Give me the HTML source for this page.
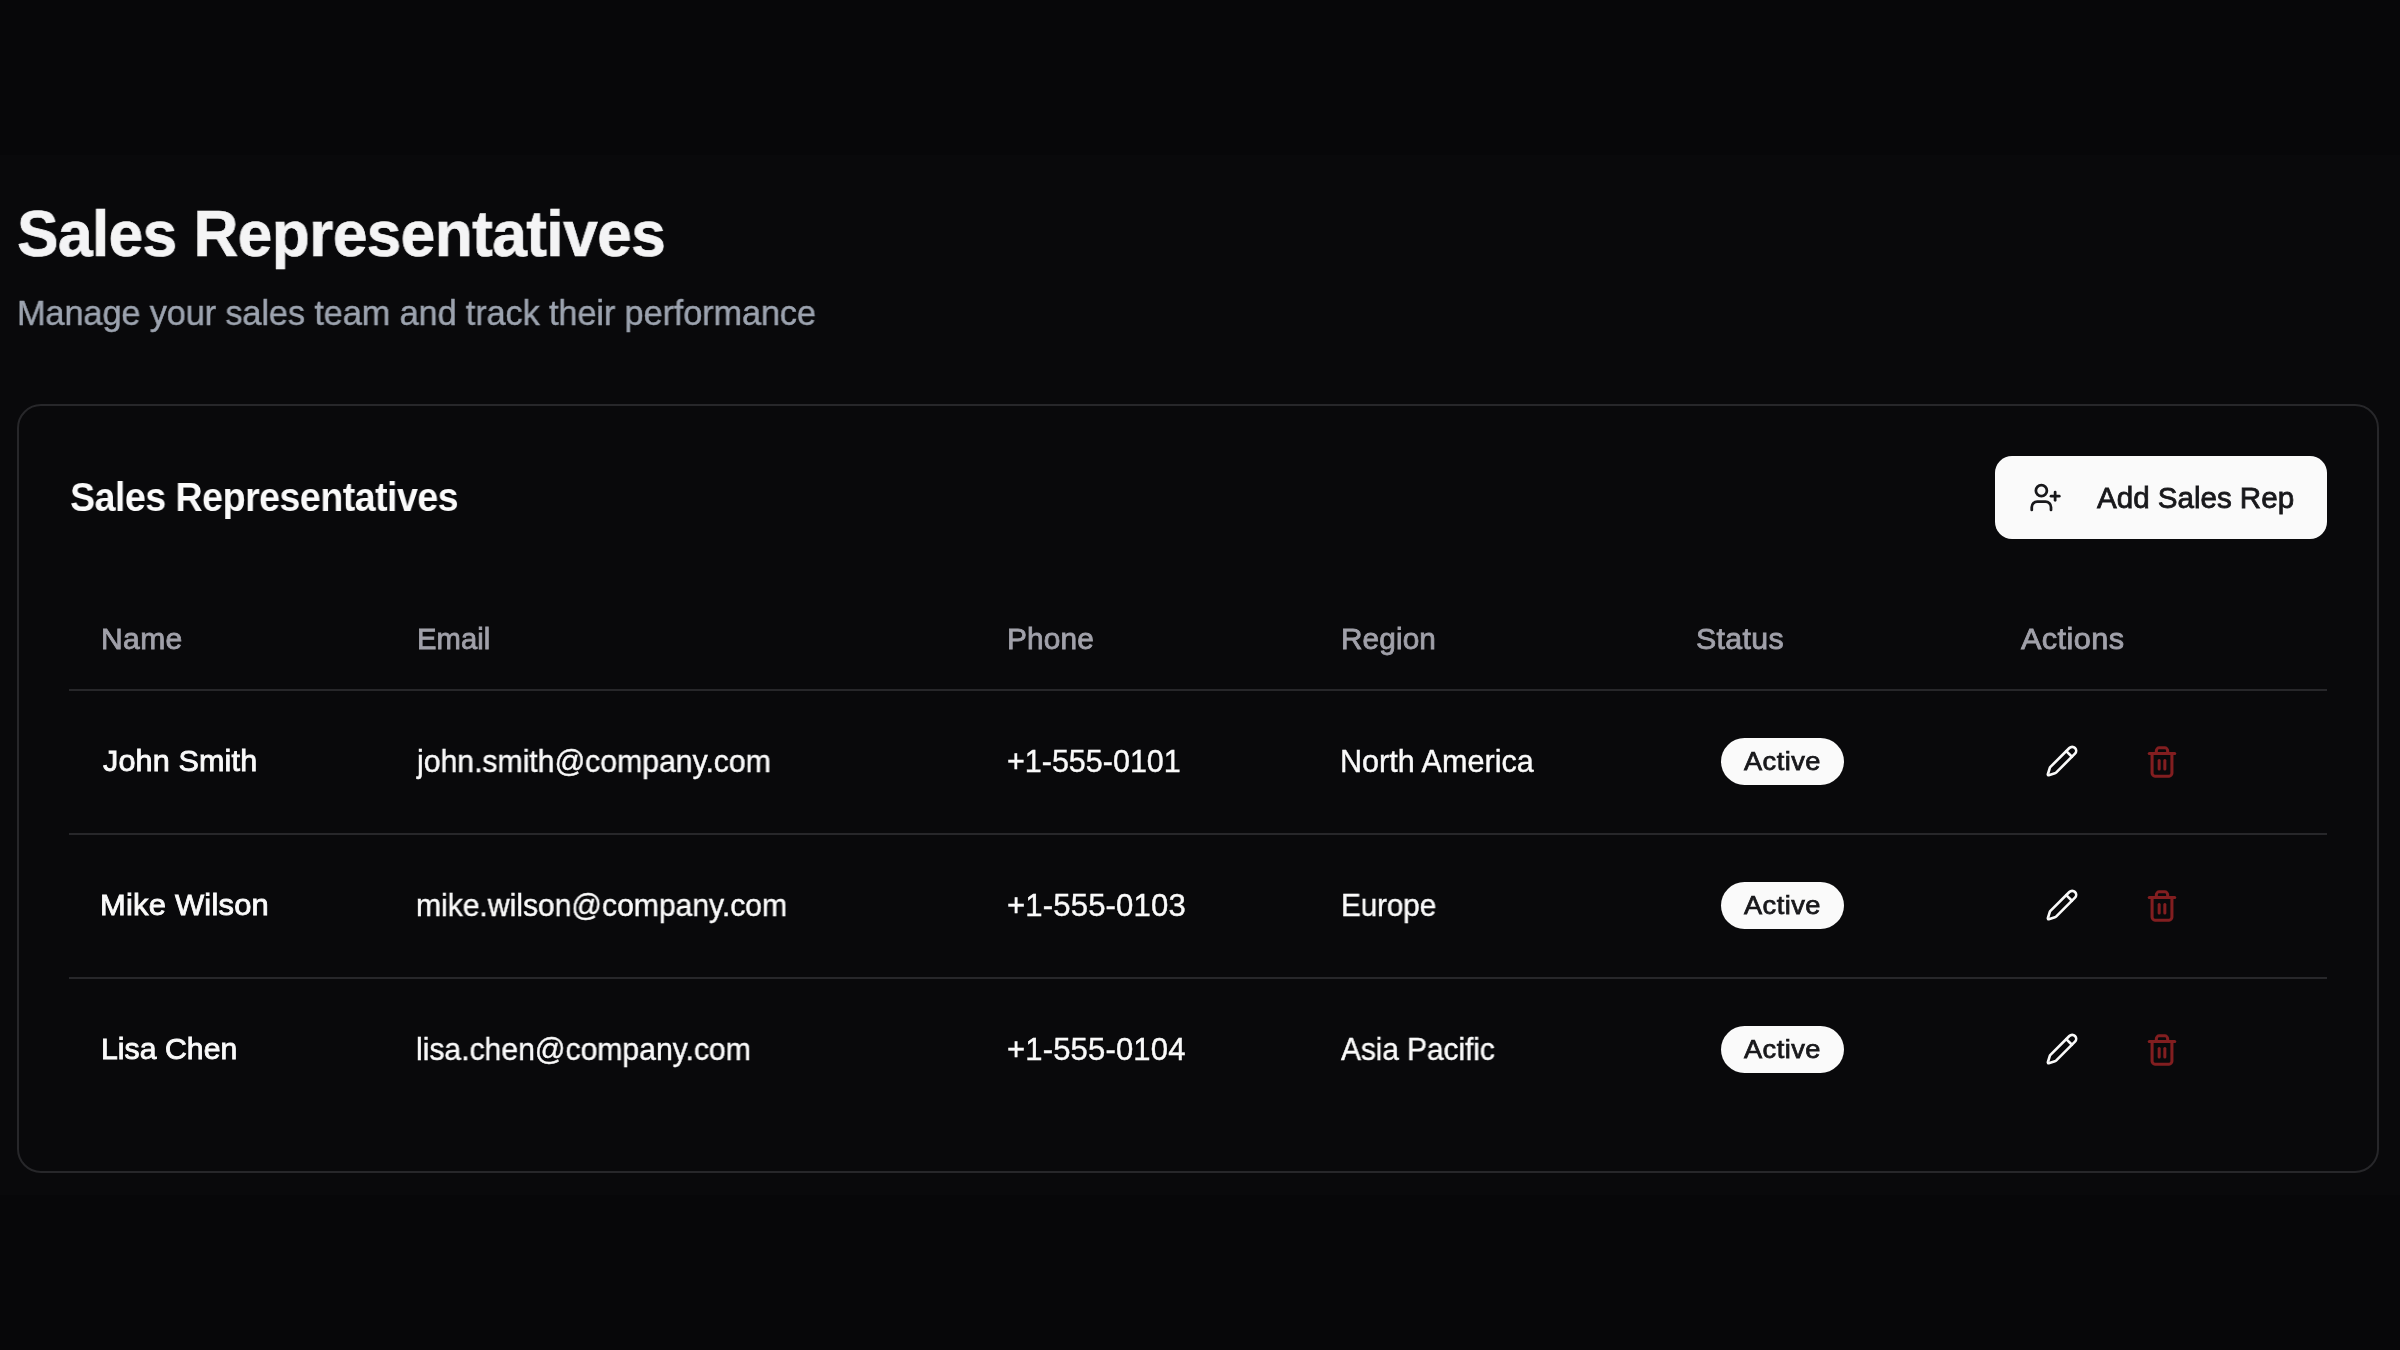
<!DOCTYPE html>
<html><head><meta charset="utf-8"><title>Sales Representatives</title>
<style>
html,body{margin:0;padding:0;}
body{width:2400px;height:1350px;position:relative;overflow:hidden;background:#09090b;font-family:"Liberation Sans",sans-serif;}
.bar{position:absolute;left:0;width:2400px;background:#070709;}
.t{position:absolute;white-space:nowrap;transform-origin:0 0;will-change:transform;}
.ic{position:absolute;display:block;overflow:visible;}
.card{position:absolute;left:17px;top:404px;width:2358px;height:765px;border:2px solid #27272a;border-radius:24px;background:#09090b;box-sizing:content-box;}
.btn{position:absolute;left:1995px;top:456px;width:332px;height:83px;border-radius:17px;background:#fafafa;}
.line{position:absolute;left:69px;width:2258px;height:2px;background:#27272a;}
.badge{position:absolute;left:1721px;width:123px;height:47px;border-radius:24px;background:#fafafa;}
</style></head><body>
<div class="bar" style="top:0;height:155px"></div>
<div class="bar" style="top:1195px;height:155px"></div>
<div class="card"></div>
<div class="btn"></div>
<svg class="ic" style="left:2028.60px;top:480.60px;width:33px;height:33px" viewBox="0 0 24 24" fill="none" stroke="#18181b" stroke-width="2" stroke-linecap="round" stroke-linejoin="round"><path d="M16 21v-2a4 4 0 0 0-4-4H6a4 4 0 0 0-4 4v2"/><circle cx="9" cy="7" r="4"/><line x1="19" x2="19" y1="8" y2="14"/><line x1="22" x2="16" y1="11" y2="11"/></svg>
<div class="line" style="top:688.6px"></div>
<div class="line" style="top:832.6px"></div>
<div class="line" style="top:976.6px"></div>
<div class="badge" style="top:738px"></div>
<svg class="ic" style="left:2044.50px;top:744.00px;width:34px;height:34px" viewBox="0 0 24 24" fill="none" stroke="#fafafa" stroke-width="1.85" stroke-linecap="round" stroke-linejoin="round"><path d="M21.174 6.812a1 1 0 0 0-3.986-3.987L3.842 16.174a2 2 0 0 0-.5.83l-1.321 4.352a.5.5 0 0 0 .623.622l4.353-1.32a2 2 0 0 0 .83-.497z"/><path d="m15 5 4 4"/></svg>
<svg class="ic" style="left:2144.85px;top:744.60px;width:34px;height:34px" viewBox="0 0 24 24" fill="none" stroke="#821e20" stroke-width="2.15" stroke-linecap="round" stroke-linejoin="round"><path d="M3 6h18"/><path d="M19 6v14c0 1-1 2-2 2H7c-1 0-2-1-2-2V6"/><path d="M8 6V4c0-1 1-2 2-2h4c1 0 2 1 2 2v2"/><line x1="10" x2="10" y1="11" y2="17"/><line x1="14" x2="14" y1="11" y2="17"/></svg>
<div class="badge" style="top:882px"></div>
<svg class="ic" style="left:2044.50px;top:888.00px;width:34px;height:34px" viewBox="0 0 24 24" fill="none" stroke="#fafafa" stroke-width="1.85" stroke-linecap="round" stroke-linejoin="round"><path d="M21.174 6.812a1 1 0 0 0-3.986-3.987L3.842 16.174a2 2 0 0 0-.5.83l-1.321 4.352a.5.5 0 0 0 .623.622l4.353-1.32a2 2 0 0 0 .83-.497z"/><path d="m15 5 4 4"/></svg>
<svg class="ic" style="left:2144.85px;top:888.60px;width:34px;height:34px" viewBox="0 0 24 24" fill="none" stroke="#821e20" stroke-width="2.15" stroke-linecap="round" stroke-linejoin="round"><path d="M3 6h18"/><path d="M19 6v14c0 1-1 2-2 2H7c-1 0-2-1-2-2V6"/><path d="M8 6V4c0-1 1-2 2-2h4c1 0 2 1 2 2v2"/><line x1="10" x2="10" y1="11" y2="17"/><line x1="14" x2="14" y1="11" y2="17"/></svg>
<div class="badge" style="top:1026px"></div>
<svg class="ic" style="left:2044.50px;top:1032.00px;width:34px;height:34px" viewBox="0 0 24 24" fill="none" stroke="#fafafa" stroke-width="1.85" stroke-linecap="round" stroke-linejoin="round"><path d="M21.174 6.812a1 1 0 0 0-3.986-3.987L3.842 16.174a2 2 0 0 0-.5.83l-1.321 4.352a.5.5 0 0 0 .623.622l4.353-1.32a2 2 0 0 0 .83-.497z"/><path d="m15 5 4 4"/></svg>
<svg class="ic" style="left:2144.85px;top:1032.60px;width:34px;height:34px" viewBox="0 0 24 24" fill="none" stroke="#821e20" stroke-width="2.15" stroke-linecap="round" stroke-linejoin="round"><path d="M3 6h18"/><path d="M19 6v14c0 1-1 2-2 2H7c-1 0-2-1-2-2V6"/><path d="M8 6V4c0-1 1-2 2-2h4c1 0 2 1 2 2v2"/><line x1="10" x2="10" y1="11" y2="17"/><line x1="14" x2="14" y1="11" y2="17"/></svg>
<div class="t" style="left:17.34px;top:202.28px;font-size:64.884px;line-height:64.884px;font-weight:700;color:#f4f4f5;-webkit-text-stroke:0.7px #f4f4f5;letter-spacing:-0.598px;transform:scaleX(0.9586)">Sales Representatives</div>
<div class="t" style="left:17.44px;top:294.68px;font-size:35.087px;line-height:35.087px;font-weight:400;color:#9ca3af;-webkit-text-stroke:0.45px #9ca3af;letter-spacing:-0.149px;transform:scaleX(0.9798)">Manage your sales team and track their performance</div>
<div class="t" style="left:69.67px;top:478.20px;font-size:40.262px;line-height:40.262px;font-weight:700;color:#fafafa;letter-spacing:-0.583px;transform:scaleX(0.9349)">Sales Representatives</div>
<div class="t" style="left:2096.70px;top:482.57px;font-size:29.593px;line-height:29.593px;font-weight:400;color:#18181b;-webkit-text-stroke:0.8px #18181b;letter-spacing:-0.024px;transform:scaleX(1.0003)">Add Sales Rep</div>
<div class="t" style="left:101.23px;top:625.07px;font-size:29.084px;line-height:29.084px;font-weight:400;color:#a1a1aa;-webkit-text-stroke:0.8px #a1a1aa;letter-spacing:0.360px;transform:scaleX(1.0342)">Name</div>
<div class="t" style="left:417.24px;top:625.07px;font-size:29.084px;line-height:29.084px;font-weight:400;color:#a1a1aa;-webkit-text-stroke:0.8px #a1a1aa;letter-spacing:0.094px;transform:scaleX(1.0036)">Email</div>
<div class="t" style="left:1006.85px;top:625.07px;font-size:29.084px;line-height:29.084px;font-weight:400;color:#a1a1aa;-webkit-text-stroke:0.8px #a1a1aa;letter-spacing:0.150px;transform:scaleX(1.0244)">Phone</div>
<div class="t" style="left:1340.71px;top:625.07px;font-size:29.084px;line-height:29.084px;font-weight:400;color:#a1a1aa;-webkit-text-stroke:0.8px #a1a1aa;letter-spacing:0.120px;transform:scaleX(1.0225)">Region</div>
<div class="t" style="left:1695.71px;top:625.07px;font-size:29.084px;line-height:29.084px;font-weight:400;color:#a1a1aa;-webkit-text-stroke:0.8px #a1a1aa;letter-spacing:0.330px;transform:scaleX(1.0422)">Status</div>
<div class="t" style="left:2021.10px;top:625.07px;font-size:29.084px;line-height:29.084px;font-weight:400;color:#a1a1aa;-webkit-text-stroke:0.8px #a1a1aa;letter-spacing:0.370px;transform:scaleX(1.0557)">Actions</div>
<div class="t" style="left:102.90px;top:746.24px;font-size:29.971px;line-height:29.971px;font-weight:400;color:#fafafa;-webkit-text-stroke:0.85px #fafafa;letter-spacing:0.133px;transform:scaleX(1.0200)">John Smith</div>
<div class="t" style="left:417.19px;top:746.06px;font-size:30.494px;line-height:30.494px;font-weight:400;color:#fafafa;-webkit-text-stroke:0.4px #fafafa;letter-spacing:-0.050px;transform:scaleX(0.9930)">john.smith@company.com</div>
<div class="t" style="left:1007.00px;top:746.06px;font-size:30.494px;line-height:30.494px;font-weight:400;color:#fafafa;-webkit-text-stroke:0.4px #fafafa;transform:scaleX(1.0000)">+1-555-0101</div>
<div class="t" style="left:1339.99px;top:746.06px;font-size:30.494px;line-height:30.494px;font-weight:400;color:#fafafa;-webkit-text-stroke:0.4px #fafafa;letter-spacing:0.012px;transform:scaleX(1.0026)">North America</div>
<div class="t" style="left:1744.00px;top:749.20px;font-size:25.436px;line-height:25.436px;font-weight:400;color:#18181b;-webkit-text-stroke:0.75px #18181b;letter-spacing:0.420px;transform:scaleX(1.0704)">Active</div>
<div class="t" style="left:100.44px;top:890.24px;font-size:29.971px;line-height:29.971px;font-weight:400;color:#fafafa;-webkit-text-stroke:0.85px #fafafa;letter-spacing:0.210px;transform:scaleX(1.0312)">Mike Wilson</div>
<div class="t" style="left:415.52px;top:890.06px;font-size:30.494px;line-height:30.494px;font-weight:400;color:#fafafa;-webkit-text-stroke:0.4px #fafafa;letter-spacing:-0.061px;transform:scaleX(0.9906)">mike.wilson@company.com</div>
<div class="t" style="left:1006.88px;top:890.06px;font-size:30.494px;line-height:30.494px;font-weight:400;color:#fafafa;-webkit-text-stroke:0.4px #fafafa;letter-spacing:0.138px;transform:scaleX(1.0208)">+1-555-0103</div>
<div class="t" style="left:1340.55px;top:890.06px;font-size:30.494px;line-height:30.494px;font-weight:400;color:#fafafa;-webkit-text-stroke:0.4px #fafafa;letter-spacing:-0.144px;transform:scaleX(0.9747)">Europe</div>
<div class="t" style="left:1744.00px;top:893.20px;font-size:25.436px;line-height:25.436px;font-weight:400;color:#18181b;-webkit-text-stroke:0.75px #18181b;letter-spacing:0.420px;transform:scaleX(1.0704)">Active</div>
<div class="t" style="left:101.48px;top:1034.24px;font-size:29.971px;line-height:29.971px;font-weight:400;color:#fafafa;-webkit-text-stroke:0.85px #fafafa;letter-spacing:0.037px;transform:scaleX(1.0076)">Lisa Chen</div>
<div class="t" style="left:415.52px;top:1034.06px;font-size:30.494px;line-height:30.494px;font-weight:400;color:#fafafa;-webkit-text-stroke:0.4px #fafafa;letter-spacing:-0.056px;transform:scaleX(0.9918)">lisa.chen@company.com</div>
<div class="t" style="left:1006.88px;top:1034.06px;font-size:30.494px;line-height:30.494px;font-weight:400;color:#fafafa;-webkit-text-stroke:0.4px #fafafa;letter-spacing:0.153px;transform:scaleX(1.0178)">+1-555-0104</div>
<div class="t" style="left:1340.80px;top:1034.06px;font-size:30.494px;line-height:30.494px;font-weight:400;color:#fafafa;-webkit-text-stroke:0.4px #fafafa;letter-spacing:-0.101px;transform:scaleX(0.9827)">Asia Pacific</div>
<div class="t" style="left:1744.00px;top:1037.20px;font-size:25.436px;line-height:25.436px;font-weight:400;color:#18181b;-webkit-text-stroke:0.75px #18181b;letter-spacing:0.420px;transform:scaleX(1.0704)">Active</div>
</body></html>
